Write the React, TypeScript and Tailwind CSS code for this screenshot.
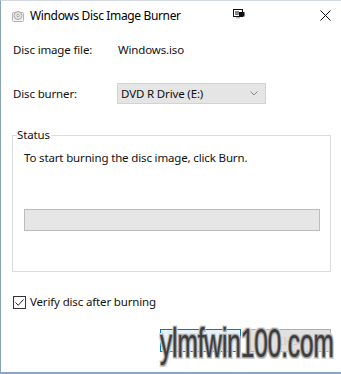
import React from "react";

function DiscIcon() {
  return (
    <svg width="14" height="14" viewBox="0 0 14 14">
      <rect x="1.5" y="3.5" width="11" height="9" rx="1" fill="#f2f2f2" stroke="#b5b5b5" />
      <circle cx="7" cy="6.5" r="4" fill="#e4e4e4" stroke="#a8a8a8" />
      <circle cx="7" cy="6.5" r="1.2" fill="#fff" stroke="#999" strokeWidth="0.8" />
    </svg>
  );
}

function SnapIcon() {
  return (
    <svg width="12" height="11" viewBox="0 0 12 11">
      <rect x="0.5" y="0.5" width="9" height="7" fill="none" stroke="#111" />
      <line x1="3" y1="2" x2="3" y2="6" stroke="#111" />
      <line x1="5" y1="2" x2="5" y2="6" stroke="#111" />
      <rect x="6" y="3" width="5.5" height="4.5" fill="#111" />
      <rect x="3" y="8" width="4" height="1.5" fill="#bbb" />
    </svg>
  );
}

function CloseX() {
  return (
    <svg width="11" height="11" viewBox="0 0 11 11">
      <path d="M0.5 0.5 L10.5 10.5 M10.5 0.5 L0.5 10.5" stroke="#111" strokeWidth="1" />
    </svg>
  );
}

export default function App() {
  return (
    <div
      className="relative w-[341px] h-[374px] bg-white border-t border-t-[#d3d9e0] border-l border-l-[#8aa3bd] border-b-2 border-b-[#8aa6c6] flex flex-col overflow-hidden text-[11.5px] tracking-[-0.15px] text-[#111]"
      style={{ fontFamily: '"Noto Sans", "Open Sans", sans-serif' }}
    >
      {/* title bar */}
      <div className="h-[29px] flex items-center shrink-0">
        <div className="ml-[10px] w-[14px] h-[14px] flex items-center">
          <DiscIcon />
        </div>
        <div className="ml-[5px] text-[12px] tracking-[-0.35px] leading-[16px] text-black">Windows Disc Image Burner</div>
        <div className="flex-1" />
        <div className="mr-[75px] mt-[-2px]">
          <SnapIcon />
        </div>
        <div className="mr-[10px]">
          <CloseX />
        </div>
      </div>

      {/* content */}
      <div className="pl-[11px] pr-[10px] flex flex-col">
        <div className="mt-[10px] h-[20px] flex items-center pl-[1px]">
          <div className="w-[105px]">Disc image file:</div>
          <div>Windows.iso</div>
        </div>

        <div className="mt-[23px] h-[21px] flex items-center pl-[1px]">
          <div className="w-[104px]">Disc burner:</div>
          <div className="w-[149px] h-[21px] bg-[#e5e5e5] border border-[#d3d3d3] flex items-center pl-[3px] pr-[7px]">
            <span className="flex-1">DVD R Drive (E:)</span>
            <svg width="8" height="5" viewBox="0 0 8 5">
              <path d="M0.5 0.5 L4 4 L7.5 0.5" fill="none" stroke="#888" strokeWidth="1" />
            </svg>
          </div>
        </div>

        <fieldset className="mt-[23px] w-[319px] border border-[#dcdcdc] pb-[40px]">
          <legend className="ml-[4px] pr-[1px] leading-[16px]">Status</legend>
          <div className="ml-[11px] mt-[7px] leading-[16px]">To start burning the disc image, click Burn.</div>
          <div className="ml-[11px] mt-[43px] w-[296px] h-[22px] bg-[#e6e6e6] border border-[#bcbcbc]" />
        </fieldset>

        <div className="mt-[22px] h-[16px] flex items-center pl-[1px]">
          <div className="w-[13px] h-[13px] border border-[#333] flex items-center justify-center">
            <svg width="11" height="11" viewBox="0 0 11 11">
              <path d="M1.5 5.5 L4.2 8.3 L9.5 2.5" fill="none" stroke="#222" strokeWidth="1" />
            </svg>
          </div>
          <div className="ml-[4px]">Verify disc after burning</div>
        </div>

        <div className="mt-[19px] flex justify-end gap-[9px]">
          <div className="w-[81px] h-[23px] bg-[#e5f1fb] border border-[#0078d7] flex items-center justify-center text-[#e5f1fb]">Burn</div>
          <div className="w-[81px] h-[23px] bg-[#e1e1e1] border border-[#adadad] flex items-center justify-center text-[#c8c8c8]">Close</div>
        </div>
      </div>

      {/* watermark */}
      <div
        className="absolute left-[159px] top-[318px] text-[40px] leading-[48px] text-[#3d3d3d] origin-left scale-x-[0.61] whitespace-nowrap"
        style={{
          fontFamily: '"Liberation Sans", Arial, sans-serif',
          textShadow:
            "1px 1px 0 #a0a0a0, -1px -1px 0 #a0a0a0, 1px -1px 0 #a0a0a0, -1px 1px 0 #a0a0a0, 2px 2px 0 #c8c8c8, -2px -2px 0 #e0e0e0, 2px -2px 0 #e0e0e0, -2px 2px 0 #e0e0e0, 0 2px 0 #c0c0c0",
        }}
      >
        ylmfwin100.com
      </div>
    </div>
  );
}
